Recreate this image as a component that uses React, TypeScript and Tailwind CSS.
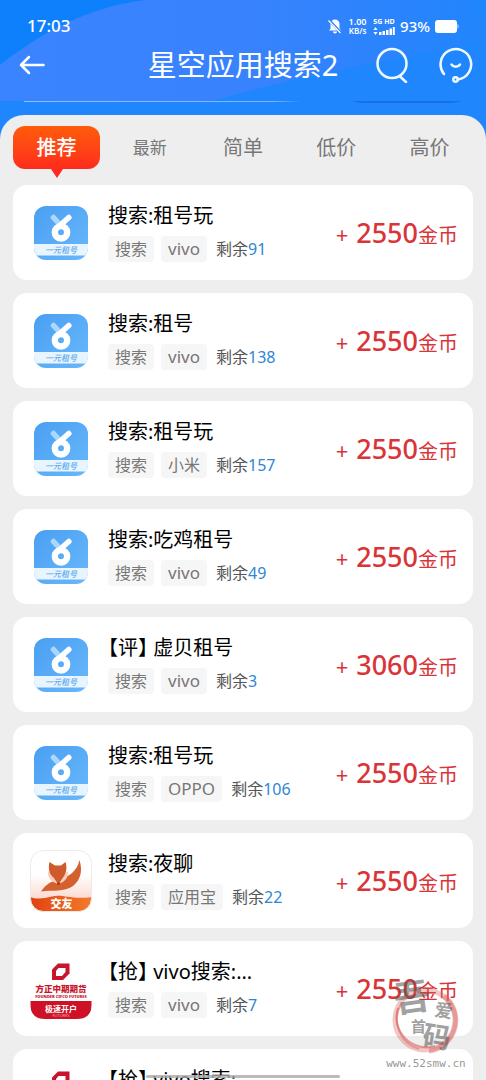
import React from "react";

type IconKind = "rent" | "fox" | "futures";

interface Task {
  title: string;
  source: string;
  left: number;
  coins: number;
  icon: IconKind;
}

const tasks: Task[] = [
  { title: "搜索:租号玩", source: "vivo", left: 91, coins: 2550, icon: "rent" },
  { title: "搜索:租号", source: "vivo", left: 138, coins: 2550, icon: "rent" },
  { title: "搜索:租号玩", source: "小米", left: 157, coins: 2550, icon: "rent" },
  { title: "搜索:吃鸡租号", source: "vivo", left: 49, coins: 2550, icon: "rent" },
  { title: "【评】 虚贝租号", source: "vivo", left: 3, coins: 3060, icon: "rent" },
  { title: "搜索:租号玩", source: "OPPO", left: 106, coins: 2550, icon: "rent" },
  { title: "搜索:夜聊", source: "应用宝", left: 22, coins: 2550, icon: "fox" },
  { title: "【抢】 vivo搜索:...", source: "vivo", left: 7, coins: 2550, icon: "futures" },
  { title: "【抢】 vivo搜索:...", source: "vivo", left: 7, coins: 2550, icon: "futures" },
];

const tabs = ["推荐", "最新", "简单", "低价", "高价"];

function RentIcon() {
  return (
    <svg viewBox="0 0 62 62" className="size-[62px] shrink-0" aria-hidden="true">
      <defs>
        <linearGradient id="rentBg" x1="0" y1="0" x2="1" y2="1">
          <stop offset="0" stopColor="#4a9ff2" />
          <stop offset="1" stopColor="#68b8fb" />
        </linearGradient>
        <clipPath id="rentClip">
          <rect x="4" y="4" width="54" height="54" rx="12" />
        </clipPath>
      </defs>
      <g clipPath="url(#rentClip)">
        <rect x="4" y="4" width="54" height="54" fill="url(#rentBg)" />
        <rect x="4" y="42" width="54" height="11.5" fill="#e9f5fe" />
      </g>
      <path d="M23.500 15.500l5.500 6" stroke="#a9d8fd" strokeWidth="5.500" strokeLinecap="round" />
      <path d="M38.800 15.500L25.500 27.500" stroke="#fff" strokeWidth="5.500" strokeLinecap="round" />
      <circle cx="31" cy="30.300" r="6.200" fill="none" stroke="#fff" strokeWidth="6.400" />
      <text
        x="31"
        y="50.500"
        textAnchor="middle"
        fontSize="8"
        fontWeight="500"
        fontStyle="italic"
        fill="#59a9ee"
      >
        一元租号
      </text>
    </svg>
  );
}

function FoxIcon() {
  return (
    <svg viewBox="0 0 62 62" className="size-[62px] shrink-0" aria-hidden="true">
      <defs>
        <linearGradient id="foxBg" x1="0" y1="0" x2="0" y2="1">
          <stop offset="0.4" stopColor="#ffffff" />
          <stop offset="0.8" stopColor="#fbd9d0" />
        </linearGradient>
        <linearGradient id="foxWave" x1="0" y1="0" x2="1" y2="0">
          <stop offset="0" stopColor="#e0430f" />
          <stop offset="1" stopColor="#f47a2c" />
        </linearGradient>
        <clipPath id="foxClip">
          <rect x="0.500" y="0.500" width="61" height="61" rx="13" />
        </clipPath>
      </defs>
      <g clipPath="url(#foxClip)">
        <rect width="62" height="62" fill="url(#foxBg)" />
        <path d="M0 47C8 50 14 48 22 46.500C34 44 40 50 62 47V62H0Z" fill="url(#foxWave)" />
      </g>
      <rect x="0.500" y="0.500" width="61" height="61" rx="13" fill="none" stroke="#eeeae8" />
      <path d="M49.500 10C52.500 20 51.500 29 43 36C34 42 23 40 11 41.500C16 34 21 31.500 28 30C38 27 47 22 49.500 10Z" fill="#d4602e" />
      <path d="M18 21C17 27 21 32 28 34L24 26ZM38 21C39 27 35 32 28.500 34L32 26Z" fill="#f9cdbb" />
      <path d="M19.500 12L25 15.500H31L35.500 12C37.500 18 36 24 33 27.500L28.500 34.500L23.500 27.500C19 24 18 18 19.500 12Z" fill="#cf5a2b" />
      <circle cx="28.500" cy="33.500" r="1.500" fill="#a63b18" />
      <text x="31.500" y="58" textAnchor="middle" fontSize="11" fontWeight="900" fill="#fff">
        交友
      </text>
    </svg>
  );
}

function FuturesIcon() {
  return (
    <svg viewBox="0 0 62 62" className="size-[62px] shrink-0" aria-hidden="true">
      <path d="M28 5.500H39.500V15.500L33 22H22V11.500Z" fill="#c8142c" />
      <path d="M28.500 10H35.500V14L32 18H26V13Z" fill="#fff" />
      <text x="31" y="34" textAnchor="middle" fontSize="8.500" fontWeight="900" fill="#c8142c">
        方正中期期货
      </text>
      <text x="31" y="39.500" textAnchor="middle" fontSize="4" fontWeight="900" fill="#c8142c">
        FOUNDER CIFCO FUTURES
      </text>
      <path d="M0.500 43H61.500V47Q61.500 61 47 61H15Q0.500 61 0.500 47Z" fill="#cf1126" />
      <text x="31" y="53.500" textAnchor="middle" fontSize="8" fontWeight="700" fill="#fff">
        极速开户
      </text>
      <text x="31" y="58.500" textAnchor="middle" fontSize="4" fill="#f3a3aa">
        FUTURES
      </text>
    </svg>
  );
}

function TaskIcon({ kind }: { kind: IconKind }) {
  if (kind === "fox") return <FoxIcon />;
  if (kind === "futures") return <FuturesIcon />;
  return <RentIcon />;
}

function StatusBar() {
  return (
    <div className="flex h-[50px] items-center justify-between px-[27px] pt-0.5 text-white">
      <span className="text-[17px] leading-5 font-medium">17:03</span>
      <div className="flex items-center gap-[5px]">
        <svg viewBox="0 0 14 16" className="h-4 w-3.5" aria-hidden="true">
          <path d="M7 1.500a4.500 4.500 0 0 0-4.500 4.500v4.500L1 12.500h12l-1.500-2V6A4.500 4.500 0 0 0 7 1.500ZM5 13.500h4a2 2 0 0 1-4 0Z" fill="#fff" />
          <path d="M1 2l12 13" stroke="#317ffb" strokeWidth="2.600" />
          <path d="M0.500 2.500l12 12.500" stroke="#fff" strokeWidth="1.200" />
        </svg>
        <div className="flex w-[21px] flex-col items-center text-[8px] leading-[9px] font-semibold">
          <span className="text-[9px]">1.00</span>
          <span>KB/s</span>
        </div>
        <div className="flex flex-col items-center gap-px">
          <span className="text-[7px] leading-2 font-bold whitespace-nowrap">5G HD</span>
          <svg viewBox="0 0 22 8" className="h-2 w-[22px]" aria-hidden="true" fill="#fff">
            <path d="M0.500 3l2-3 2 3ZM0.500 5l2 3 2-3Z" />
            <rect x="6" y="5" width="2.500" height="3" />
            <rect x="9.500" y="4" width="2.500" height="4" />
            <rect x="13" y="3" width="2.500" height="5" />
            <rect x="16.500" y="1.500" width="2.500" height="6.500" />
            <rect x="19.800" y="0" width="2" height="8" />
          </svg>
        </div>
        <span className="text-[15px] leading-5 font-medium">93%</span>
        <svg viewBox="0 0 24 13" className="h-[13px] w-6" aria-hidden="true">
          <rect width="22" height="13" rx="3" fill="#fff" />
          <path d="M22.500 4c1.500 0.500 1.500 4.500 0 5Z" fill="#b9d6ff" />
        </svg>
      </div>
    </div>
  );
}

function Header() {
  return (
    <header className="relative h-[115px] shrink-0">
      <svg
        viewBox="0 0 486 115"
        preserveAspectRatio="none"
        className="absolute inset-0 size-full"
        aria-hidden="true"
      >
        <defs>
          <linearGradient id="headArc" x1="0" y1="0" x2="1" y2="0">
            <stop offset="0" stopColor="#3b84ff" />
            <stop offset="0.500" stopColor="#3982fd" />
            <stop offset="1" stopColor="#2185fc" />
          </linearGradient>
          <linearGradient id="headLine" x1="0" y1="0" x2="1" y2="0">
            <stop offset="0" stopColor="#8ac0ff" />
            <stop offset="0.900" stopColor="#7ab6ff" />
            <stop offset="1" stopColor="#2787ff" />
          </linearGradient>
        </defs>
        <path d="M0 0H160V80H0Z" fill="#0f80fb" />
        <path d="M0 65C40 34 84 8 145 0H465C475 12 482 25 486 40C390 60 300 76 212 101H0Z" fill="url(#headArc)" />
        <rect x="24" y="101" width="276" height="1" fill="url(#headLine)" />
        <path d="M352 101H462Q456 103 448 103H366Q358 103 352 101Z" fill="#1670e0" />
      </svg>
      <div className="relative">
        <StatusBar />
        <div className="flex h-[30px] items-center px-[13px] text-white">
          <div className="flex flex-1">
            <button type="button" aria-label="返回" className="flex h-8 w-[38px] items-center justify-center">
              <svg viewBox="0 0 26 20" className="h-5 w-[26px]" fill="none" stroke="#fff" strokeWidth="2.500" strokeLinecap="round" strokeLinejoin="round" aria-hidden="true">
                <path d="M24.500 10H2M10 2L2 10l8 8" />
              </svg>
            </button>
          </div>
          <h1 className="text-[29px] leading-8 font-normal whitespace-nowrap">星空应用搜索2</h1>
          <div className="flex flex-1 justify-end gap-[27px]">
            <button type="button" aria-label="搜索" className="size-9">
              <svg viewBox="0 0 36 36" className="size-9" fill="none" stroke="#eefaff" strokeWidth="2.500" strokeLinecap="round" aria-hidden="true">
                <circle cx="18" cy="16.500" r="14.500" />
                <path d="M25.500 29l6.500 6" />
              </svg>
            </button>
            <button type="button" aria-label="客服" className="size-9">
              <svg viewBox="0 0 36 36" className="size-9" fill="none" stroke="#eefaff" strokeWidth="2.500" strokeLinecap="round" aria-hidden="true">
                <path d="M7 27A15.300 15.300 0 1 1 21 32.500" />
                <circle cx="18.500" cy="32.500" r="2.200" />
                <path d="M14.500 17.500c2 3 6.500 3 8.500 0" />
              </svg>
            </button>
          </div>
        </div>
      </div>
    </header>
  );
}

function Tabs() {
  return (
    <nav className="grid h-[70px] grid-cols-5 px-2.5 pt-[11px] text-[#777777]">
      {tabs.map((tab, i) =>
        i === 0 ? (
          <div key={tab} className="flex flex-col items-center">
            <button type="button" className="h-[43px] w-[87px] rounded-xl bg-linear-to-b from-[#ff5a08] to-[#ff2a1c] text-[20px] font-medium text-white">
              {tab}
            </button>
            <svg viewBox="0 0 12 9" className="h-[9px] w-3" aria-hidden="true">
              <path d="M0 0H12L6 9Z" fill="#ff2a1c" />
            </svg>
          </div>
        ) : (
          <button key={tab} type="button" className={i === 1 ? "h-[43px] text-[17px]" : "h-[43px] text-[20px]"}>
            {tab}
          </button>
        )
      )}
    </nav>
  );
}

function Tag({ children }: { children: string }) {
  const latin = /^[A-Za-z]+$/.test(children);
  return (
    <span
      className={
        latin
          ? "rounded bg-[#f6f6f6] px-[7px] text-[17px] leading-[26px] text-[#777777]"
          : "rounded bg-[#f6f6f6] px-[7px] leading-[26px] text-[#777777]"
      }
    >
      {children}
    </span>
  );
}

function TaskCard({ task }: { task: Task }) {
  return (
    <li className="flex h-[95px] shrink-0 items-center gap-4 rounded-[14px] bg-white pr-[15px] pl-[17px]">
      <TaskIcon kind={task.icon} />
      <div className="min-w-0 flex-1 pb-0.5">
        <h2 className="text-[20px] leading-7 font-normal whitespace-nowrap text-black [font-feature-settings:'halt']">
          {task.title}
        </h2>
        <div className="mt-1.5 flex gap-[7px] text-[16px] leading-[26px] whitespace-nowrap">
          <Tag>搜索</Tag>
          <Tag>{task.source}</Tag>
          <span className="pl-0.5 text-[#555555]">
            剩余<span className="text-[#2f86d6]">{task.left}</span>
          </span>
        </div>
      </div>
      <p className="flex items-baseline whitespace-nowrap text-[#d93438]">
        <span className="mr-2 text-[22px]">+</span>
        <span className="text-[27px] leading-9 font-medium">{task.coins}</span>
        <span className="text-[20px]">金币</span>
      </p>
    </li>
  );
}

function Watermark() {
  return (
    <svg viewBox="0 0 100 100" className="pointer-events-none absolute right-4 bottom-2.5 size-[100px]" aria-hidden="true">
      <g fill="none" stroke="#d9605c">
        <circle cx="55" cy="50" r="30" strokeWidth="5" opacity="0.350" />
        <path d="M74 26A31 31 0 0 1 59 81" strokeWidth="5" opacity="0.450" />
        <path d="M28 38A30 30 0 0 0 65 76" strokeWidth="2" opacity="0.600" />
        <path d="M31 34A31 31 0 0 0 49 79" strokeWidth="2" opacity="0.400" />
      </g>
      <g fill="#555555" opacity="0.550" fontWeight="700">
        <text x="24" y="41" fontSize="36" transform="rotate(-8 40 30)">吾</text>
        <text x="65" y="47" fontSize="18" transform="rotate(8 74 40)">爱</text>
        <text x="41" y="62" fontSize="15">首</text>
        <text x="53" y="77" fontSize="28" transform="rotate(8 66 66)">码</text>
      </g>
      <text x="56" y="97" textAnchor="middle" fontSize="11" fill="#999999" className="font-['DejaVu_Sans_Mono',monospace]" fontWeight="400">
        www.52smw.cn
      </text>
    </svg>
  );
}

export default function App() {
  return (
    <div className="relative flex h-screen flex-col overflow-hidden bg-[#1f86fd] font-['Noto_Sans','Noto_Sans_CJK_SC',sans-serif]">
      <Header />
      <main className="min-h-0 flex-1 overflow-hidden rounded-t-3xl bg-[#eeeeee]">
        <Tabs />
        <ul className="flex flex-col gap-[13px] px-[13px]">
          {tasks.map((task, i) => (
            <TaskCard key={i} task={task} />
          ))}
        </ul>
      </main>
      <Watermark />
      <div className="absolute bottom-0.5 left-1/2 h-[3px] w-[194px] -translate-x-1/2 rounded-full bg-[#aaaaaa]/80" />
    </div>
  );
}
